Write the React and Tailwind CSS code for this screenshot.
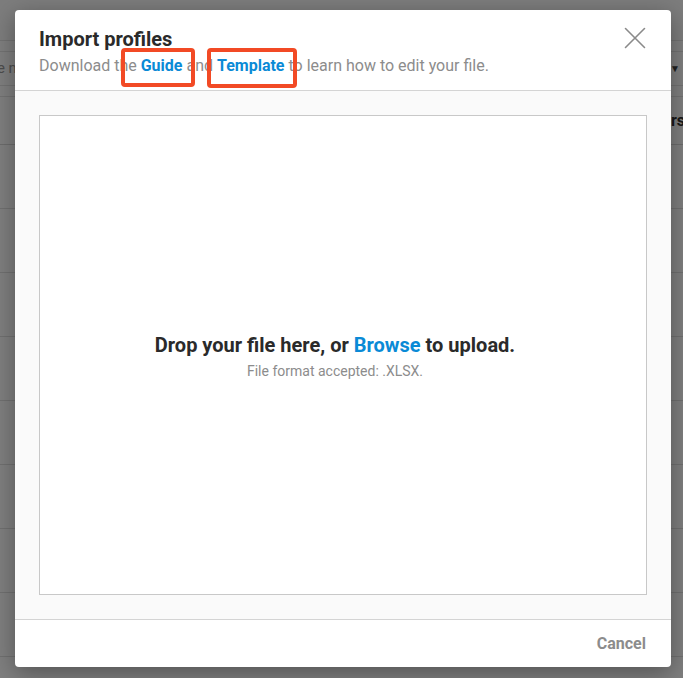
import React from "react";

const rows = Array.from({ length: 8 });

export default function App() {
  return (
    <div className="relative w-[683px] h-[678px] overflow-hidden bg-white" style={{ fontFamily: "Roboto, 'Noto Sans', sans-serif" }}>
      {/* page behind */}
      <div className="flex flex-col w-full">
        <div className="h-[41px] bg-[#fafafa] border-b border-[#e4e4e4]" />
        <div className="h-[56px] flex items-center border-b border-[#e4e4e4]">
          <div className="flex-1 h-[35px] border-y border-[#e4e4e4] flex items-center justify-between pr-[3px] text-[15px] text-[#9a9a9a]">
            <span className="-ml-[27px]">Type name</span>
            <span className="text-[10px] text-[#444]">▼</span>
          </div>
        </div>
        <div className="h-[48px] flex items-center justify-end border-b border-[#d8d8d8] text-[16px] font-bold text-[#333]">
          <span className="-mr-[2px]">Users</span>
        </div>
        {rows.map((_, i) => (
          <div key={i} className="h-[64px] border-b border-[#e0e0e0]" />
        ))}
      </div>

      {/* overlay */}
      <div className="absolute inset-0 bg-black/50" />

      {/* modal */}
      <div className="absolute left-[15px] top-[10px] w-[656px] h-[657px] bg-white rounded-[4px] shadow-[0_6px_24px_rgba(0,0,0,0.35)] flex flex-col overflow-hidden">
        <div className="relative h-[81px] shrink-0 border-b border-[#d4d4d4] pl-[24px] pt-[17px]">
          <h2 className="text-[20px] leading-[24px] font-bold text-[#2a2a2a]">Import profiles</h2>
          <p className="mt-[5px] text-[16px] leading-[20px] text-[#8c8c8c]">
            Download the <span className="font-bold text-[#0a8ad6]">Guide</span> and{" "}
            <span className="font-bold text-[#0a8ad6]">Template</span> to learn how to edit your file.
          </p>
          <button className="absolute left-[609px] top-[17px] w-[22px] h-[22px] flex items-center justify-center">
            <svg width="22" height="22" viewBox="0 0 22 22" fill="none" stroke="#8a8a8a" strokeWidth="1.6" strokeLinecap="round">
              <path d="M1.5 1.5 L20.5 20.5 M20.5 1.5 L1.5 20.5" />
            </svg>
          </button>
          {/* annotation boxes */}
          <div className="absolute left-[106px] top-[38px] w-[74px] h-[39px] border-[4px] border-[#f24a25] rounded-[4px]" />
          <div className="absolute left-[192px] top-[38px] w-[90px] h-[40px] border-[4px] border-[#f24a25] rounded-[4px]" />
        </div>
        <div className="flex-1 bg-[#fafafa] p-[24px] border-b border-[#d4d4d4]">
          <div className="h-full bg-white border border-[#c8c8c8] flex flex-col items-center justify-center pt-[2px] pr-[16px]">
            <p className="text-[20px] leading-[24px] font-bold text-[#2a2a2a]">
              Drop your file here, or <span className="text-[#0a8ad6]">Browse</span> to upload.
            </p>
            <p className="mt-[6px] text-[14px] leading-[16px] text-[#8c8c8c]">File format accepted: .XLSX.</p>
          </div>
        </div>
        <div className="h-[47px] shrink-0 flex items-center justify-end pr-[25px]">
          <button className="text-[16px] leading-[20px] font-bold text-[#8c8c8c]">Cancel</button>
        </div>
      </div>
    </div>
  );
}
